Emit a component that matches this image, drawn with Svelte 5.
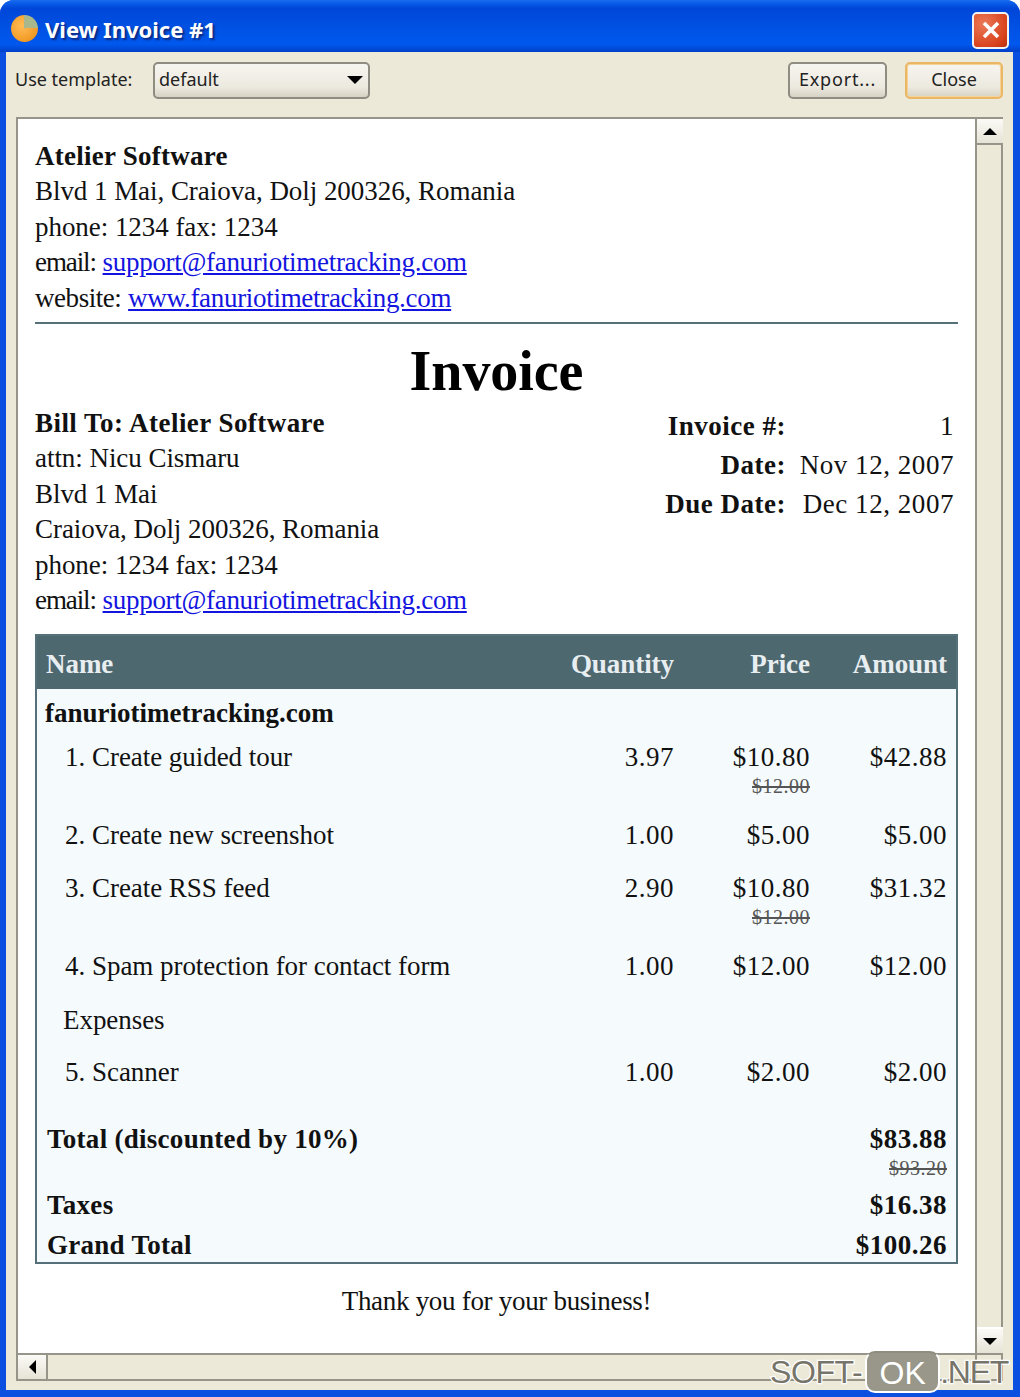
<script>
  const items = [
    { n: '1.', name: 'Create guided tour', qty: '3.97', price: '$10.80', old: '$12.00', amount: '$42.88' },
    { n: '2.', name: 'Create new screenshot', qty: '1.00', price: '$5.00', amount: '$5.00' },
    { n: '3.', name: 'Create RSS feed', qty: '2.90', price: '$10.80', old: '$12.00', amount: '$31.32' },
    { n: '4.', name: 'Spam protection for contact form', qty: '1.00', price: '$12.00', amount: '$12.00' },
  ];
</script>

<div class="window">
  <header class="titlebar">
    <span class="app-icon"></span>
    <span class="title">View Invoice #1</span>
    <button class="x" aria-label="Close window">
      <svg width="22" height="22" viewBox="0 0 22 22"><path d="M4 4 18 18M18 4 4 18" stroke="#fff" stroke-width="3.6" /></svg>
    </button>
  </header>

  <div class="body">
    <div class="toolbar">
      <span class="label">Use template:</span>
      <div class="select"><span class="value">default</span><span class="caret"></span></div>
      <button class="btn export">Export...</button>
      <button class="btn close">Close</button>
    </div>

    <div class="frame">
      <div class="doc">
        <section class="company">
          <b>Atelier Software</b><br />
          Blvd 1 Mai, Craiova, Dolj 200326, Romania<br />
          phone: 1234 fax: 1234<br />
          <span class="key">email:</span> <a href="#a">support@fanuriotimetracking.com</a><br />
          <span class="site">website:</span> <a href="#a">www.fanuriotimetracking.com</a>
        </section>
        <h1>Invoice</h1>
        <section class="meta">
          <div>
            <b class="bill">Bill To: Atelier Software</b><br />
            attn: Nicu Cismaru<br />
            Blvd 1 Mai<br />
            Craiova, Dolj 200326, Romania<br />
            phone: 1234 fax: 1234<br />
            <span class="key">email:</span> <a href="#a">support@fanuriotimetracking.com</a>
          </div>
          <div class="facts">
            <b>Invoice #:</b><span>1</span>
            <b>Date:</b><span>Nov 12, 2007</span>
            <b>Due Date:</b><span>Dec 12, 2007</span>
          </div>
        </section>

        <table>
          <thead>
            <tr><th class="name">Name</th><th>Quantity</th><th>Price</th><th>Amount</th></tr>
          </thead>
          <tbody>
            <tr class="group"><td colspan="4"><b>fanuriotimetracking.com</b></td></tr>
            {#each items as it}
              <tr class="item">
                <td class="name"><span class="num">{it.n}</span>{it.name}</td>
                <td>{it.qty}</td>
                <td>{it.price}{#if it.old}<s>{it.old}</s>{/if}</td>
                <td>{it.amount}</td>
              </tr>
            {/each}
            <tr class="item sub"><td colspan="4" class="name">Expenses</td></tr>
            <tr class="item">
              <td class="name"><span class="num">5.</span>Scanner</td>
              <td>1.00</td><td>$2.00</td><td>$2.00</td>
            </tr>
            <tr class="total first">
              <td colspan="3">Total (discounted by 10%)</td>
              <td>$83.88<s>$93.20</s></td>
            </tr>
            <tr class="total"><td colspan="3">Taxes</td><td>$16.38</td></tr>
            <tr class="total last"><td colspan="3">Grand Total</td><td>$100.26</td></tr>
          </tbody>
        </table>

        <p class="thanks">Thank you for your business!</p>
      </div>

      <div class="vbar">
        <span class="sbtn"><i class="up"></i></span>
        <span class="sbtn"><i class="down"></i></span>
      </div>
      <div class="hbar">
        <span class="sbtn"><i class="left"></i></span>
      </div>
      <div class="corner"></div>
    </div>
  </div>

  <div class="mark"><span class="soft">SOFT-</span><span class="ok">OK</span><span class="net">.NET</span></div>
</div>

<style>
  :global(body) {
    margin: 0;
  }

  .window {
    position: relative;
    width: 1020px;
    height: 1397px;
    box-sizing: border-box;
    padding: 0 7px 7px 6px;
    background: #0a4fe0;
    border-radius: 14px 14px 0 0;
    overflow: hidden;
    display: flex;
    flex-direction: column;
    font-family: 'Liberation Serif', serif;
    color: #111;
  }

  .titlebar {
    height: 52px;
    box-sizing: border-box;
    margin: 0 -7px 0 -6px;
    padding: 8px 11px 0 11px;
    flex-shrink: 0;
    display: flex;
    align-items: center;
    gap: 7px;
    background: linear-gradient(#1a6cf0 0, #0a5ee8 6%, #0046d8 16%, #0052e4 55%, #0058ee 85%, #0040c8 100%);
  }

  .app-icon {
    width: 27px;
    height: 27px;
    margin-top: -4px;
    border-radius: 50%;
    background:
      conic-gradient(#a9b88c 0 25%, transparent 25%),
      radial-gradient(circle at 40% 40%, #ffbc55, #ec8a10);
  }

  .title {
    font: bold 22px 'Noto Sans', 'DejaVu Sans', sans-serif;
    color: #fff;
    text-shadow: 2px 2px 2px #0a2a80;
    margin-top: -2px;
  }

  .x {
    margin-left: auto;
    width: 37px;
    height: 37px;
    padding: 0;
    display: grid;
    place-items: center;
    border: 2px solid #f2f2f2;
    border-radius: 5px;
    background: radial-gradient(circle at 30% 30%, #ec7a58, #d8431c 70%, #b83210);
  }

  .body {
    flex: 1;
    min-height: 0;
    display: flex;
    flex-direction: column;
    background: #ece9d8;
    padding: 0 10px 9px 10px;
  }

  .toolbar {
    height: 65px;
    flex-shrink: 0;
    display: flex;
    align-items: center;
    font: 18px 'Noto Sans', sans-serif;
    color: #222;
    padding-bottom: 9px;
    box-sizing: border-box;
  }

  .label {
    margin-left: -1px;
    width: 138px;
    padding-bottom: 2px;
  }

  .select {
    width: 217px;
    height: 37px;
    box-sizing: border-box;
    border: 2px solid #8f8c82;
    border-radius: 5px;
    background: linear-gradient(#f6f5ef, #ece9df 70%, #d6d2c4);
    padding-left: 4px;
    display: flex;
    align-items: center;
    justify-content: space-between;
  }

  .value {
    padding-bottom: 2px;
  }

  .caret {
    margin-right: 5px;
    border: 8px solid transparent;
    border-top-color: #000;
    border-bottom-width: 0;
  }

  .btn {
    height: 37px;
    box-sizing: border-box;
    border: 2px solid #8f8c82;
    border-radius: 5px;
    background: linear-gradient(#f6f5ef, #ece9df 70%, #d6d2c4);
    font: inherit;
    color: inherit;
    padding: 0 0 2px;
  }

  .export {
    margin-left: auto;
    width: 99px;
    letter-spacing: 0.8px;
  }

  .close {
    margin-left: 18px;
    width: 98px;
    border-color: #e9b765;
    box-shadow: inset 0 0 0 1px #f6d394;
  }

  .frame {
    flex: 1;
    min-height: 0;
    display: grid;
    grid-template-columns: 1fr 26px;
    grid-template-rows: 1fr 26px;
    border: 2px solid #97948a;
    background: #fff;
  }

  .doc {
    min-width: 0;
    overflow: hidden;
    padding: 20px 17px 0 17px;
    font-size: 27px;
    line-height: 35.4px;
    letter-spacing: -0.05px;
  }

  a {
    color: #1414e0;
    letter-spacing: -0.3px;
  }

  .key {
    letter-spacing: -1.1px;
  }

  .site {
    letter-spacing: -0.45px;
  }

  .company b {
    letter-spacing: 0.25px;
  }

  .bill {
    letter-spacing: 0.45px;
  }

  .company {
    border-bottom: 2px solid #56707a;
    padding-bottom: 6px;
  }

  h1 {
    margin: 0;
    text-align: center;
    font-size: 56px;
    line-height: 62px;
    height: 62px;
    padding-top: 16px;
    color: #000;
  }

  .meta {
    display: flex;
    justify-content: space-between;
    margin-top: 4px;
  }

  .facts {
    display: grid;
    grid-template-columns: 1fr 168px;
    grid-auto-rows: 35.4px;
    row-gap: 3.6px;
    padding: 3px 4px 0 0;
    width: 300px;
    box-sizing: border-box;
    text-align: right;
    white-space: nowrap;
    height: max-content;
  }

  .facts b {
    letter-spacing: 0.5px;
  }

  .facts span {
    letter-spacing: 0.55px;
  }

  table {
    width: 100%;
    margin-top: 16px;
    border-collapse: collapse;
    table-layout: fixed;
    background: #f5fafc;
    border: 2px solid #56707a;
  }

  th {
    background: #4e6870;
    color: #e8eef0;
    height: 54px;
    padding: 3px 9px 0 0;
    text-align: right;
    font-weight: bold;
    box-sizing: border-box;
  }

  th.name {
    text-align: left;
    padding-left: 9px;
  }

  th:nth-child(2) { width: 145px; }
  th:nth-child(3) { width: 136px; }
  th:nth-child(4) { width: 138px; }

  td {
    padding: 0 9px 0 0;
    text-align: right;
    vertical-align: top;
    letter-spacing: 0.5px;
  }

  .group td {
    text-align: left;
    padding: 7px 0 0 8px;
    letter-spacing: 0;
  }

  .item td {
    padding-top: 8px;
    padding-bottom: 9px;
  }

  .item td.name {
    text-align: left;
    padding-left: 28px;
    letter-spacing: -0.05px;
  }

  .sub td.name {
    padding-top: 9px;
    padding-left: 26px;
  }

  .num {
    display: inline-block;
    width: 27px;
  }

  s {
    display: block;
    font-size: 20px;
    line-height: 22px;
    color: #555;
    margin-bottom: 4px;
  }

  .total td {
    font-weight: bold;
    padding-top: 5px;
    line-height: 35.4px;
  }

  .total td:first-child {
    text-align: left;
    padding-left: 10px;
    letter-spacing: 0.28px;
  }

  .total.first td {
    padding-top: 23px;
  }

  .total.last td {
    padding-top: 6px;
    line-height: 32.4px;
  }

  .total s {
    margin-top: -1px;
    margin-bottom: 4px;
    font-weight: normal;
  }

  .thanks {
    margin: 20px 0 0;
    text-align: center;
    letter-spacing: -0.3px;
  }

  .vbar {
    grid-row: 1;
    grid-column: 2;
    background: #ece9d8;
    border-left: 2px solid #97948a;
    display: flex;
    flex-direction: column;
    justify-content: space-between;
    box-sizing: border-box;
  }

  .hbar {
    grid-row: 2;
    grid-column: 1;
    background: #ece9d8;
    border-top: 2px solid #97948a;
    display: flex;
    box-sizing: border-box;
  }

  .corner {
    background: #ece9d8;
    border-top: 2px solid #97948a;
    border-left: 2px solid #97948a;
  }

  .sbtn {
    width: 26px;
    height: 26px;
    flex-shrink: 0;
    box-sizing: border-box;
    display: grid;
    place-items: center;
    background: linear-gradient(#fbfaf6, #e6e3d6);
    border-bottom: 2px solid #97948a;
  }

  .vbar .sbtn:last-child {
    border-bottom: 0;
    border-top: 2px solid #fff;
  }

  .hbar .sbtn {
    border-bottom: 0;
    border-right: 2px solid #97948a;
    height: 24px;
    width: 30px;
  }

  i {
    width: 0;
    height: 0;
    border: 7px solid transparent;
  }

  .up { border-bottom-color: #000; border-top-width: 0; }
  .down { border-top-color: #000; border-bottom-width: 0; }
  .left { border-right-color: #000; border-left-width: 0; }

  .mark {
    position: absolute;
    left: 770px;
    top: 1351px;
    display: flex;
    align-items: center;
    font: 32px 'Liberation Sans', sans-serif;
    color: #77756a;
    -webkit-text-stroke: 2.5px #fff;
    paint-order: stroke fill;
  }

  .soft {
    letter-spacing: -0.4px;
  }

  .ok {
    margin: 0 0 0 3px;
    width: 75px;
    height: 42px;
    line-height: 40px;
    text-align: center;
    box-sizing: border-box;
    color: #fff;
    -webkit-text-stroke: 0;
    background: #99978a;
    border: 2px solid #fff;
    border-top-color: #8f8d80;
    border-radius: 10px;
  }

  .net {
    letter-spacing: -1.3px;
  }
</style>
